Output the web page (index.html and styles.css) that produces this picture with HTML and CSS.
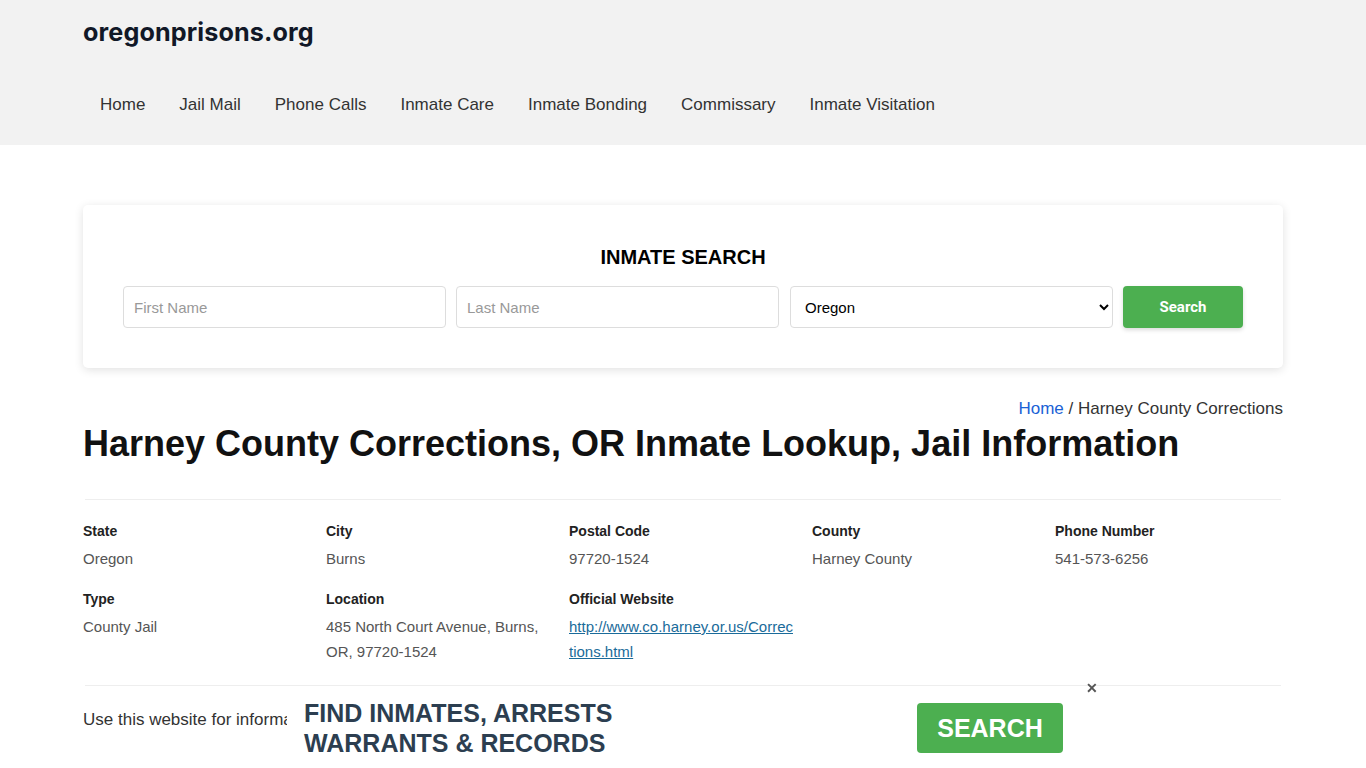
FILE: index.html
```html
<!DOCTYPE html>
<html lang="en">
<head>
<meta charset="utf-8">
<title>Harney County Corrections, OR Inmate Lookup, Jail Information</title>
<link rel="stylesheet" href="styles.css">
</head>
<body>
<header class="site-header">
  <div class="container">
    <div class="logo">oregonprisons.org</div>
    <nav class="nav">
      <a href="#">Home</a>
      <a href="#">Jail Mail</a>
      <a href="#">Phone Calls</a>
      <a href="#">Inmate Care</a>
      <a href="#">Inmate Bonding</a>
      <a href="#">Commissary</a>
      <a href="#">Inmate Visitation</a>
    </nav>
  </div>
</header>

<main class="container">
  <section class="search-card">
    <h2 class="search-title">INMATE SEARCH</h2>
    <form class="search-form">
      <input type="text" placeholder="First Name">
      <input type="text" placeholder="Last Name">
      <select><option>Oregon</option></select>
      <button type="button">Search</button>
    </form>
  </section>

  <div class="breadcrumb"><a href="#">Home</a> / Harney County Corrections</div>
  <h1 class="title">Harney County Corrections, OR Inmate Lookup, Jail Information</h1>

  <hr class="rule">
  <div class="info-grid">
    <div class="item"><div class="label">State</div><div class="value">Oregon</div></div>
    <div class="item"><div class="label">City</div><div class="value">Burns</div></div>
    <div class="item"><div class="label">Postal Code</div><div class="value">97720-1524</div></div>
    <div class="item"><div class="label">County</div><div class="value">Harney County</div></div>
    <div class="item"><div class="label">Phone Number</div><div class="value">541-573-6256</div></div>
    <div class="item"><div class="label">Type</div><div class="value">County Jail</div></div>
    <div class="item"><div class="label">Location</div><div class="value">485 North Court Avenue, Burns, OR, 97720-1524</div></div>
    <div class="item"><div class="label">Official Website</div><div class="value"><a class="url" href="#">http://www.co.harney.or.us/Corrections.html</a></div></div>
  </div>
  <hr class="rule">
  <p class="intro">Use this website for information purposes only. Information about inmates may not be current.</p>
</main>

<div class="ad-banner">
  <div class="ad-text">FIND INMATES, ARRESTS<br>WARRANTS &amp; RECORDS</div>
  <a class="ad-button" href="#">SEARCH</a>
  <span class="ad-close">&#x2715;</span>
</div>
</body>
</html>
```

FILE: styles.css
```css
* { box-sizing: border-box; }
html, body { margin: 0; padding: 0; }
body {
  font-family: "Liberation Sans", Arial, sans-serif;
  color: #333;
  background: #fff;
  overflow: hidden;
  height: 768px;
}
.container {
  width: 1200px;
  margin: 0 auto;
}
.site-header {
  background: #f2f2f2;
  height: 145px;
}
.logo {
  font-family: Inter, "Liberation Sans", sans-serif;
  font-weight: 700;
  font-size: 25.2px;
  color: #111827;
  padding-top: 17px;
  height: 60px;
  letter-spacing: 0.1px;
}
.nav {
  display: flex;
  padding-top: 36px;
}
.nav a {
  color: #333;
  text-decoration: none;
  font-size: 17px;
  padding: 0 17px;
  line-height: 1;
}
.search-card {
  margin-top: 60px;
  background: #fff;
  border-radius: 5px;
  box-shadow: 0 2px 10px rgba(0,0,0,0.12);
  padding: 37px 40px 40px;
  height: 163px;
}
.search-title {
  margin: 0 0 14px;
  text-align: center;
  font-size: 20px;
  font-weight: 700;
  color: #000;
  line-height: 30px;
}
.search-form {
  display: flex;
  gap: 10px;
}
.search-form input,
.search-form select {
  flex: 0 0 323px;
  width: 323px;
  height: 42px;
  border: 1px solid #ddd;
  border-radius: 4px;
  font-family: "Liberation Sans", Arial, sans-serif;
  font-size: 15px;
  padding: 0 10px;
  color: #000;
  background: #fff;
}
.search-form select {
  margin-left: 1px;
  padding: 0 6px 0 10px;
}
.search-form input::placeholder { color: #999; }
.search-form button {
  margin-left: auto;
  width: 120px;
  flex: none;
  height: 42px;
  border: none;
  border-radius: 4px;
  background: #4caf50;
  color: #fff;
  font-family: Roboto, "Liberation Sans", sans-serif;
  font-weight: 700;
  font-size: 15px;
  box-shadow: 0 2px 4px rgba(0,0,0,0.15);
}
.breadcrumb {
  margin-top: 31px;
  text-align: right;
  font-size: 17px;
  color: #333;
  line-height: 20px;
}
.breadcrumb a { color: #1a62d6; text-decoration: none; }
.title {
  margin: 3px 0 0;
  font-size: 36px;
  font-weight: 700;
  color: #111;
  line-height: 44px;
}
.rule {
  border: 0;
  border-top: 1px solid #eee;
  margin: 0 2px;
}
.title + .rule { margin-top: 33px; }
.info-grid {
  display: grid;
  grid-template-columns: repeat(5, 243px);
  column-gap: 0;
  row-gap: 19px;
  padding: 22px 0 21px;
}
.label {
  font-size: 14px;
  font-weight: 700;
  color: #222;
  line-height: 18px;
}
.value {
  margin-top: 6px;
  font-size: 15px;
  color: #555;
  line-height: 25px;
  padding-right: 15px;
}
.url {
  color: #1a6b9a;
  word-break: break-all;
}
.intro {
  margin: 24px 0 0;
  font-size: 17px;
  color: #333;
  white-space: nowrap;
  width: 204px;
  overflow: hidden;
}
.ad-banner {
  position: fixed;
  left: 287px;
  bottom: 0;
  width: 789px;
  height: 72px;
  background: #fff;
  display: flex;
  align-items: flex-start;
  padding: 0 0 0 17px;
}
.ad-text {
  font-weight: 700;
  font-size: 25px;
  line-height: 30px;
  color: #2c3e50;
  width: 613px;
  padding-top: 2px;
}
.ad-button {
  margin-top: 7px;
  width: 146px;
  height: 50px;
  background: #4caf50;
  color: #fff;
  font-weight: 700;
  font-size: 25px;
  text-decoration: none;
  border-radius: 4px;
  display: flex;
  align-items: center;
  justify-content: center;
}
.ad-close {
  position: absolute;
  right: -22px;
  top: -16px;
  font-size: 14px;
  font-weight: 700;
  color: #555;
}
```
